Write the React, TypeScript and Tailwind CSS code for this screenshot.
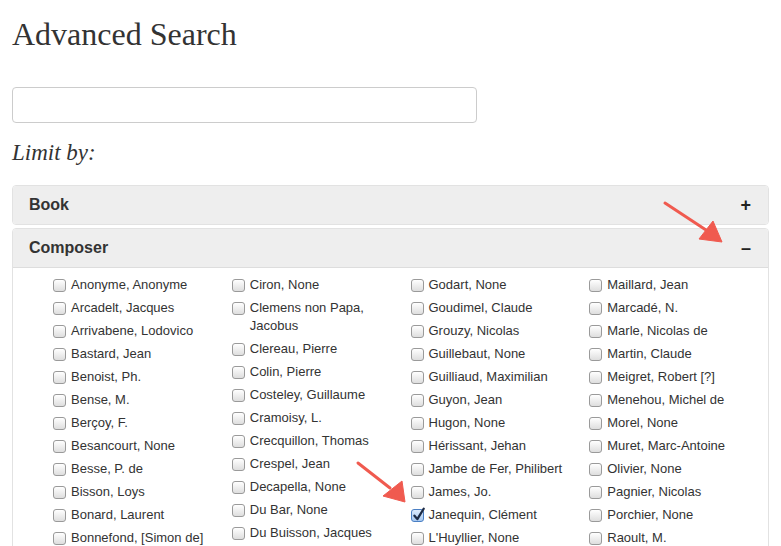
import { clsx } from 'clsx';

type Item = { label: string; checked?: boolean };

const COLUMNS: Item[][] = [
  [
    { label: 'Anonyme, Anonyme' },
    { label: 'Arcadelt, Jacques' },
    { label: 'Arrivabene, Lodovico' },
    { label: 'Bastard, Jean' },
    { label: 'Benoist, Ph.' },
    { label: 'Bense, M.' },
    { label: 'Berçoy, F.' },
    { label: 'Besancourt, None' },
    { label: 'Besse, P. de' },
    { label: 'Bisson, Loys' },
    { label: 'Bonard, Laurent' },
    { label: 'Bonnefond, [Simon de]' },
  ],
  [
    { label: 'Ciron, None' },
    { label: 'Clemens non Papa, Jacobus' },
    { label: 'Clereau, Pierre' },
    { label: 'Colin, Pierre' },
    { label: 'Costeley, Guillaume' },
    { label: 'Cramoisy, L.' },
    { label: 'Crecquillon, Thomas' },
    { label: 'Crespel, Jean' },
    { label: 'Decapella, None' },
    { label: 'Du Bar, None' },
    { label: 'Du Buisson, Jacques' },
  ],
  [
    { label: 'Godart, None' },
    { label: 'Goudimel, Claude' },
    { label: 'Grouzy, Nicolas' },
    { label: 'Guillebaut, None' },
    { label: 'Guilliaud, Maximilian' },
    { label: 'Guyon, Jean' },
    { label: 'Hugon, None' },
    { label: 'Hérissant, Jehan' },
    { label: 'Jambe de Fer, Philibert' },
    { label: 'James, Jo.' },
    { label: 'Janequin, Clément', checked: true },
    { label: "L'Huyllier, None" },
  ],
  [
    { label: 'Maillard, Jean' },
    { label: 'Marcadé, N.' },
    { label: 'Marle, Nicolas de' },
    { label: 'Martin, Claude' },
    { label: 'Meigret, Robert [?]' },
    { label: 'Menehou, Michel de' },
    { label: 'Morel, None' },
    { label: 'Muret, Marc-Antoine' },
    { label: 'Olivier, None' },
    { label: 'Pagnier, Nicolas' },
    { label: 'Porchier, None' },
    { label: 'Raoult, M.' },
  ],
];

function Checkbox({ checked }: { checked?: boolean }) {
  return (
    <span
      className={clsx(
        'relative mt-[3px] h-[13px] w-[13px] shrink-0 rounded-[3px] border',
        checked
          ? 'border-[#4a7fc4] bg-linear-to-b from-[#dbeafc] to-[#a6c8f0]'
          : 'border-[#9a9a9a] bg-linear-to-b from-white to-[#dedede]'
      )}
    >
      {checked && (
        <svg viewBox="0 0 13 13" className="absolute -left-px -top-[3px] h-[15px] w-[15px]">
          <path d="M3 7.5 L5.5 10.5 L11 1.5" fill="none" stroke="#1d2b45" strokeWidth="2" strokeLinecap="round" strokeLinejoin="round" />
        </svg>
      )}
    </span>
  );
}

function PanelHeader({ title, sign }: { title: string; sign: string }) {
  return (
    <div className="flex h-[38px] items-center justify-between bg-[#eeeeee] pl-4 pr-[17px]">
      <span className="text-[16px] font-bold text-[#333]">{title}</span>
      <span className="text-[18px] font-bold leading-none text-[#222]">{sign}</span>
    </div>
  );
}

export default function App() {
  return (
    <div className="relative h-screen overflow-hidden bg-white px-3 pt-[15px] font-['Liberation_Sans',Arial,sans-serif] text-[#333]">
      <h1 className="font-['Liberation_Serif','Times_New_Roman',serif] text-[32px] leading-[38px] text-[#333]">
        Advanced Search
      </h1>

      <input
        type="text"
        className="mt-[34px] block h-[36px] w-[465px] rounded-[4px] border border-[#cccccc] px-2 text-[14px] outline-none"
      />

      <h2 className="mt-4 font-['Liberation_Serif','Times_New_Roman',serif] text-[23px] italic leading-[28px] text-[#333]">
        Limit by:
      </h2>

      <div className="mt-[18px] overflow-hidden rounded-[4px] border border-[#e2e2e2]">
        <PanelHeader title="Book" sign="+" />
      </div>

      <div className="mt-[3px] overflow-hidden rounded-[4px] border border-[#e2e2e2]">
        <div className="border-b border-[#dddddd]">
          <PanelHeader title="Composer" sign="–" />
        </div>
        <div className="grid grid-cols-4 pb-4 pl-[40px] pt-[8px]">
          {COLUMNS.map((col, i) => (
            <ul key={i} className="flex flex-col">
              {col.map((item) => (
                <li key={item.label} className="mb-[5px] flex items-start gap-[5px] pr-2 text-[13px] leading-[18px] text-[#333]">
                  <Checkbox checked={item.checked} />
                  <span>{item.label}</span>
                </li>
              ))}
            </ul>
          ))}
        </div>
      </div>

      {/* annotation arrows */}
      <svg className="pointer-events-none absolute left-0 top-0" width="781" height="546" viewBox="0 0 781 546">
        <g fill="#f05a4f" stroke="#f05a4f">
          <line x1="665" y1="203" x2="706" y2="230" strokeWidth="3" strokeLinecap="round" />
          <polygon points="722,242 699,239 713,221" strokeWidth="1" strokeLinejoin="round" />
          <line x1="358" y1="463" x2="390" y2="488" strokeWidth="3" strokeLinecap="round" />
          <polygon points="405,502 383,496 402,481" strokeWidth="1" strokeLinejoin="round" />
        </g>
      </svg>
    </div>
  );
}
